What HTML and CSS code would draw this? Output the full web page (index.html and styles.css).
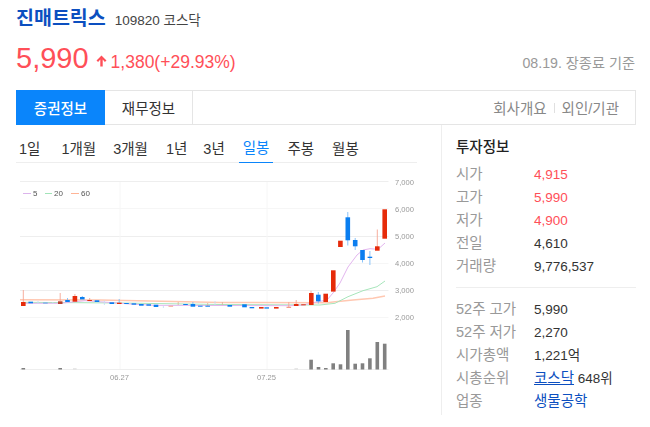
FILE: index.html
```html
<!DOCTYPE html>
<html lang="ko">
<head>
<meta charset="utf-8">
<title>진매트릭스</title>
<link rel="stylesheet" href="styles.css">
</head>
<body>
<main class="page">
  <header class="title-row">
    <a class="name">진매트릭스</a>
    <span class="code">109820 코스닥</span>
  </header>
  <section class="price-row">
    <strong class="price">5,990</strong>
    <svg class="arrow" width="11" height="12" viewBox="0 0 11 12"><path d="M5.5 0.5 L10.5 5.6 L8.9 6.9 L6.7 4.6 V11.5 H4.3 V4.6 L2.1 6.9 L0.5 5.6 Z"/></svg>
    <span class="change">1,380(+29.93%)</span>
    <span class="asof">08.19. 장종료 기준</span>
  </section>
  <nav class="tabs">
    <a class="tab active">증권정보</a>
    <a class="tab">재무정보</a>
    <div class="tab-links"><a>회사개요</a><i class="sep"></i><a>외인/기관</a></div>
  </nav>
  <div class="content">
    <section class="chart-col">
      <nav class="periods">
        <a class="p p1">1일</a>
        <a class="p">1개월</a>
        <a class="p p2">3개월</a>
        <a class="p p5">1년</a>
        <a class="p p3">3년</a>
        <a class="p on">일봉</a>
        <a class="p p4">주봉</a>
        <a class="p">월봉</a>
      </nav>
      <svg class="chart" width="404" height="215" viewBox="16 170 404 215">
        <g class="grid">
          <path d="M20 181.5H388.5"/>
          <path class="faint" d="M20 208.5H388.5"/>
          <path d="M20 236.5H388.5"/>
          <path class="faint" d="M20 263.5H388.5"/>
          <path d="M20 290.5H388.5"/>
          <path class="faint" d="M20 317.5H388.5"/>
          <path d="M20 369.5H388.5"/>
          <path class="faint" d="M120 182V369M267 182V369"/>
        </g>
        <g class="axis">
          <text x="395" y="185">7,000</text>
          <text x="395" y="212">6,000</text>
          <text x="395" y="239">5,000</text>
          <text x="395" y="266">4,000</text>
          <text x="395" y="293">3,000</text>
          <text x="395" y="320">2,000</text>
          <text x="110" y="380">06.27</text>
          <text x="257" y="380">07.25</text>
        </g>
        <g class="legend">
          <path class="l5" d="M23 193.5H31"/><text x="33" y="196">5</text>
          <path class="l20" d="M45 193.5H52"/><text x="54" y="196">20</text>
          <path class="l60" d="M71 193.5H79"/><text x="81" y="196">60</text>
        </g>
        <path class="ma m60" d="M20 299.8 L100 300 L150 301 L220 302.5 L327 302.7 L333 302 L353 300 L373 298.3 L385 296"/>
        <path class="ma m20" d="M23 302.3 L120 303 L220 304.5 L320 305 L335 303.3 L348 296.7 L363 290.7 L377 286.7 L385 281"/>
        <path class="ma m5" d="M23 303.3 L60 303.3 L85 300.7 L110 302.5 L130 304 L155 305.3 L290 305.7 L303 305 L313 302.7 L327 300 L333 293 L340 283 L348 267 L357 255 L363 250 L370 248.7 L378 249.3 L385 243"/>
        <g class="wick-up">
          <path d="M23.3 290V302M60.2 293V301M74.9 294V296M89.7 298V301M311 290.7V293M377.3 229.5V247M288.8 302V307M296.2 300V304"/>
          <path class="wk" d="M207.7 303V306M178.2 302V305M222.4 302V305"/>
        </g>
        <g class="wick-dn">
          <path d="M67.5 298V300M82.3 296V297M119.2 299V303M192.9 302V304M318.3 292V303.5M347.8 212V245.5M355.2 238V250M362.5 260V262.5M369.9 251V265"/>
          <path class="pale" d="M38 301V304M52.8 302V304M104.4 300.7V305M163.4 306V308M215 301V305"/>
        </g>
        <g class="up">
          <rect x="21" y="302" width="4.6" height="4"/>
          <rect class="dk" x="58" y="301.3" width="4.5" height="2.7"/>
          <rect x="72.6" y="296" width="4.6" height="5.7"/>
          <rect x="87.3" y="300" width="4.6" height="1"/>
          <rect x="117" y="302.7" width="4.6" height="1.3"/>
          <rect class="soft" x="168.5" y="305.7" width="4.6" height="1"/>
          <rect x="259" y="307" width="4.6" height="1.6"/>
          <rect x="274" y="307" width="4.6" height="1.6"/>
          <rect class="soft" x="286.5" y="306.7" width="4.6" height="1.3"/>
          <rect x="293.9" y="304" width="4.6" height="2"/>
          <rect x="301.2" y="304.3" width="4.6" height="1"/>
          <rect x="309" y="293" width="4.6" height="12"/>
          <rect x="323.4" y="293.7" width="4.6" height="8.3"/>
          <rect x="331" y="270.3" width="4.6" height="21.3"/>
          <rect x="338.1" y="240.7" width="4.6" height="6.3"/>
          <rect x="375" y="246.3" width="4.6" height="4.4"/>
          <rect x="382.4" y="209.3" width="4.6" height="29.4"/>
        </g>
        <g class="dn">
          <rect x="28.4" y="301.7" width="4.6" height="1.6"/>
          <rect class="soft" x="43.1" y="302.3" width="4.6" height="1.4"/>
          <rect x="65.2" y="300" width="4.6" height="2"/>
          <rect x="80" y="297" width="4.6" height="2.4"/>
          <rect x="94.7" y="300.3" width="4.6" height="1.7"/>
          <rect x="109.5" y="302.3" width="4.6" height="1.7"/>
          <rect x="124.2" y="303" width="4.6" height="1"/>
          <rect x="131.6" y="303.3" width="4.6" height="1.4"/>
          <rect x="139" y="304" width="4.6" height="1.7"/>
          <rect x="146.4" y="304.3" width="4.6" height="1.4"/>
          <rect x="153.7" y="304.7" width="4.6" height="2.3"/>
          <rect x="183.2" y="304" width="4.6" height="1"/>
          <rect x="190.6" y="304" width="4.6" height="2.7"/>
          <rect x="198" y="305.7" width="4.6" height="1"/>
          <rect x="205.4" y="305.7" width="4.6" height="1"/>
          <rect x="227.5" y="305" width="4.6" height="1.7"/>
          <rect x="242.2" y="304.3" width="4.6" height="3"/>
          <rect x="249.6" y="307" width="4.6" height="1.3"/>
          <rect x="264.4" y="307.3" width="4.6" height="1.3"/>
          <rect x="316" y="294.7" width="4.6" height="6.6"/>
          <rect x="345.5" y="217.3" width="4.6" height="23"/>
          <rect x="352.9" y="240" width="4.6" height="6.3"/>
          <rect x="360.2" y="250" width="4.6" height="10"/>
          <rect x="367.6" y="256.7" width="4.6" height="1.3"/>
        </g>
        <g class="vol">
          <rect x="309.3" y="359.7" width="3.6" height="9.8"/>
          <rect x="316.7" y="367" width="3.6" height="2.5"/>
          <rect x="324" y="368" width="3.6" height="1.5"/>
          <rect x="331.4" y="363.3" width="3.6" height="6.2"/>
          <rect x="338.7" y="364.3" width="3.6" height="5.2"/>
          <rect x="346" y="330" width="3.6" height="39.5"/>
          <rect x="353.4" y="363.7" width="3.6" height="5.8"/>
          <rect x="360.7" y="363.3" width="3.6" height="6.2"/>
          <rect x="368.1" y="358.3" width="3.6" height="11.2"/>
          <rect x="375.5" y="342" width="3.6" height="27.5"/>
          <rect x="382.9" y="343.7" width="3.6" height="25.8"/>
          <rect x="21.5" y="368" width="3.6" height="1.5"/>
          <rect x="58.4" y="368" width="3.6" height="1.5"/>
          <rect class="soft" x="73" y="368.3" width="3.6" height="1.2"/>
          <rect class="soft" x="294.4" y="368.3" width="3.6" height="1.2"/>
        </g>
      </svg>
    </section>
    <aside class="info">
      <h2 class="info-title">투자정보</h2>
      <dl class="rows">
        <div class="row"><dt>시가</dt><dd class="red">4,915</dd></div>
        <div class="row"><dt>고가</dt><dd class="red">5,990</dd></div>
        <div class="row"><dt>저가</dt><dd class="red">4,900</dd></div>
        <div class="row"><dt>전일</dt><dd>4,610</dd></div>
        <div class="row"><dt>거래량</dt><dd>9,776,537</dd></div>
      </dl>
      <dl class="rows second">
        <div class="row"><dt>52주 고가</dt><dd>5,990</dd></div>
        <div class="row"><dt>52주 저가</dt><dd>2,270</dd></div>
        <div class="row"><dt>시가총액</dt><dd>1,221억</dd></div>
        <div class="row"><dt>시총순위</dt><dd><a class="link under">코스닥</a> 648위</dd></div>
        <div class="row"><dt>업종</dt><dd><a class="link">생물공학</a></dd></div>
      </dl>
    </aside>
  </div>
</main>
</body>
</html>
```
FILE: styles.css
```css
* { box-sizing: border-box; }
html, body { margin: 0; padding: 0; background: #fff; }
body {
  font-family: "Liberation Sans", "Noto Sans CJK KR", sans-serif;
  color: #333;
  font-size: 14.5px;
}
.page { width: 620px; margin-left: 16px; height: 427px; overflow: hidden; }

.title-row { display: flex; align-items: baseline; height: 36px; padding-top: 4px; line-height: 28px; }
.name { color: #0c4fc0; font-size: 19.5px; font-weight: 700; }
.code { margin-left: 9px; font-size: 13.5px; color: #444; }

.price-row { display: flex; align-items: baseline; height: 54px; padding-top: 4px; line-height: 36px; }
.price { color: #ff4f58; font-size: 29px; font-weight: 400; }
.arrow { fill: #ff4f58; margin-left: 7px; align-self: flex-start; margin-top: 15px; }
.change { color: #ff4f58; font-size: 17.5px; margin-left: 4px; }
.asof { margin-left: auto; font-size: 14.2px; color: #999; margin-right: 1px; }

.tabs { display: flex; align-items: stretch; width: 620px; height: 35px; border: 1px solid #e5e5e5; border-left: 0; }
.tab { width: 88px; display: flex; align-items: center; justify-content: center; color: #333; border-right: 1px solid #e5e5e5; }
.tab.active { width: 89px; margin: -1px 0; background: #0a85fb; color: #fff; border-right: 0; font-weight: 500; }
.tab-links { margin-left: auto; padding-right: 16px; display: flex; align-items: center; gap: 7px; color: #888; }
.sep { width: 1px; height: 10px; background: #e0e0e0; }

.content { display: flex; width: 620px; }
.chart-col { width: 426px; height: 290px; border-right: 1px solid #eee; }
.periods { display: flex; width: 401px; height: 38px; border-bottom: 1px solid #eee; padding-left: 3px; }
.p { display: flex; align-items: center; padding-top: 6px; margin-right: 17px; height: 38px; white-space: nowrap; }
.p.p1 { margin-right: 21px; }
.p.p2 { margin-right: 18px; }
.p.p5 { margin-right: 16px; }
.p.p3 { margin-right: 14px; }
.p.p4 { margin-right: 18px; }
.p.on { color: #0a85fb; border-bottom: 1px solid #0a85fb; padding: 6px 4px 0; margin-right: 14px; }
.chart { display: block; margin-top: 7px; filter: blur(0.35px); }

.grid path { stroke: #eeeeee; stroke-width: 1; fill: none; }
.grid .faint { stroke: #f6f6f6; }
.axis text { font-size: 7.6px; fill: #999; }
.legend text { font-size: 8px; fill: #555; }
.legend path { stroke-width: 1; fill: none; }
.l5 { stroke: #dcb4ec; }
.l20 { stroke: #a2e4b8; }
.l60 { stroke: #ffb496; }
.ma { fill: none; }
.m5 { stroke: #e2b5ee; stroke-width: 1; }
.m20 { stroke: #a7e5bb; stroke-width: 1; }
.m60 { stroke: #ffc8b2; stroke-width: 1.6; }
.wick-up path { stroke: #f5a593; stroke-width: 0.9; fill: none; }
.wick-dn path { stroke: #7cbcf8; stroke-width: 0.9; fill: none; }
.wick-dn .pale { stroke: #c6dff5; }
.wick-up .wk { stroke: #d8b89c; }
.up rect { fill: #e62b0a; }
.up .dk { fill: #b8402c; }
.up .soft { fill: #f59a88; }
.dn rect { fill: #0a7ef0; }
.dn .soft { fill: #7ab2ea; }
.vol rect { fill: #808080; }
.vol .soft { fill: #dddddd; }

.info { flex: 1; padding-left: 14px; }
.info-title { margin: 0; height: 38px; line-height: 44px; font-size: 14.5px; font-weight: 500; color: #222; }
.rows { margin: 0; padding: 0 0 9px; border-bottom: 1px solid #eee; }
.row { display: flex; height: 23px; line-height: 23px; white-space: nowrap; }
.rows.second { border-bottom: 0; padding-top: 10px; }
dt { width: 78px; color: #999; margin: 0; }
dd { margin: 0; color: #333; font-size: 13.5px; }
dd.red { color: #ff4f58; }
.link { color: #0c4fc0; font-size: 14.5px; }
.link.under { text-decoration: underline; }
```
